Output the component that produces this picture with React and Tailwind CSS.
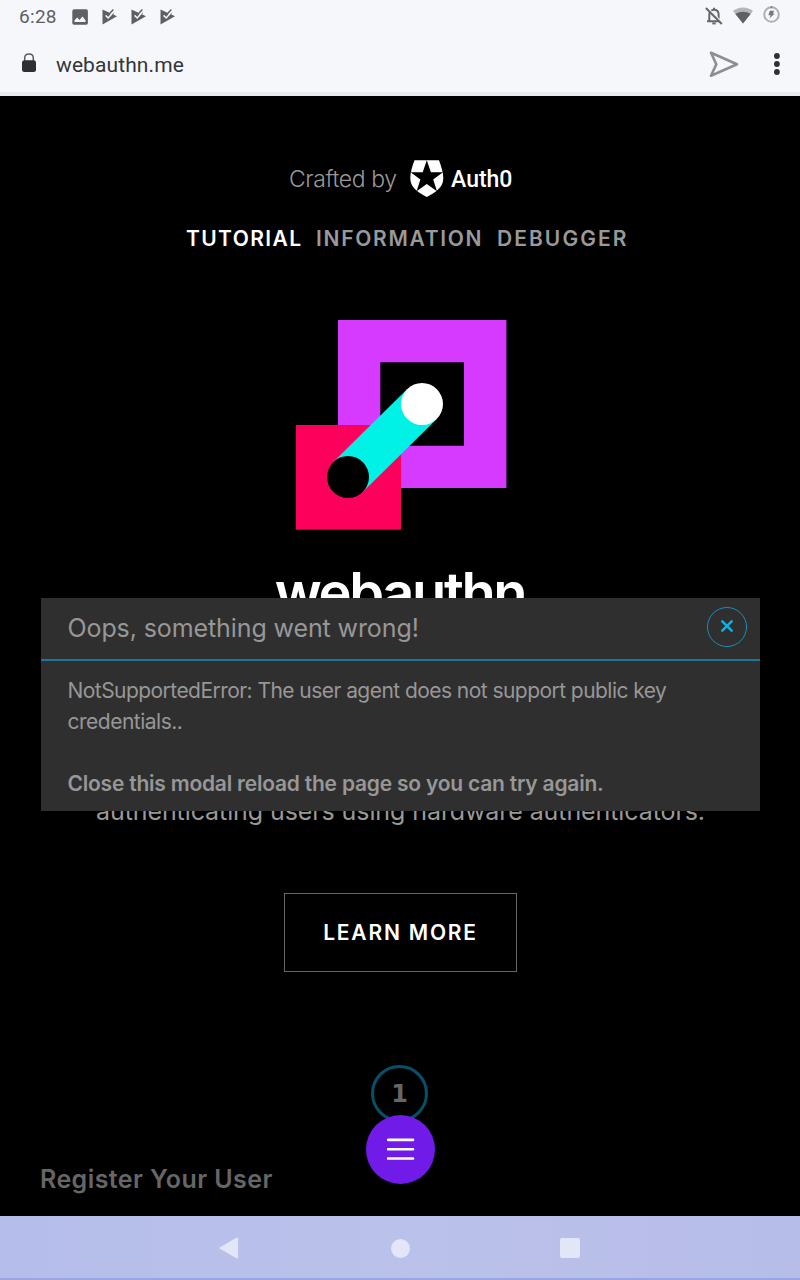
import React from "react";

function PlayCheckIcon() {
  return (
    <svg className="h-[16px] w-[15px]" viewBox="0 0 15 16">
      <path d="M0.5 0.5 L7 3.4 L9 6 L12.5 2 L11.3 5.6 L15 7.3 L0.5 15.5 Z" fill="#5f6063" />
      <path d="M3.6 6.4 L6.2 9 L12.3 1.9" fill="none" stroke="#f5f7fb" strokeWidth="1.5" />
      <path d="M4.4 4.2 L6.1 6.1 L11.4 0.6" fill="none" stroke="#5f6063" strokeWidth="1.4" />
    </svg>
  );
}

function StatusBar() {
  return (
    <div className="flex h-[33px] items-center justify-between pl-[19px] pr-[20px]">
      <div className="flex items-center">
        <span className="w-[53px] whitespace-nowrap text-[19px] leading-[33px] tracking-[0.3px] text-[#5f6063]">6:28</span>
        <svg className="h-[16px] w-[16px]" viewBox="0 0 16 16">
          <rect x="0.3" y="0.3" width="15.6" height="15.4" rx="1.8" fill="#5f6063" />
          <path d="M2.5 13 V11.2 L5.3 8.6 L7.4 11 L10.5 7.5 L13.5 11.2 V13 Z" fill="#f5f7fb" />
        </svg>
        <div className="ml-[14px] flex gap-[14px]">
          <PlayCheckIcon />
          <PlayCheckIcon />
          <PlayCheckIcon />
        </div>
      </div>
      <div className="flex items-center">
        <svg className="mb-[1px] h-[18px] w-[18px]" viewBox="0 0 18 18" fill="none" stroke="#66676a">
          <path d="M4.3 14 V7.5 C4.3 4.7 6.2 2.8 9 2.8 C11.8 2.8 13.6 4.8 13.6 7.5 V14" strokeWidth="2" />
          <path d="M2 14.2 H16 M9 0.8 V3" strokeWidth="2" />
          <path d="M7.3 16.4 H10.7" strokeWidth="2" />
          <path d="M2.3 1 L17.6 16.3" stroke="#f5f7fb" strokeWidth="2" />
          <path d="M0.9 1 L16.8 17" strokeWidth="2" />
        </svg>
        <svg className="mb-[2px] ml-[10px] h-[17px] w-[20px]" viewBox="0 0 20 17">
          <path d="M0 4 C5.5 -0.7 14.5 -0.7 20 4 L10 16.5 Z" fill="#b5b6b9" />
          <path d="M2.4 7 C7 3.9 13 3.9 17.6 7 L10 16.5 Z" fill="#5f6063" />
        </svg>
        <svg className="mb-[4px] ml-[10px] h-[17px] w-[17px]" viewBox="0 0 17 17">
          <circle cx="8.5" cy="8.5" r="7.3" fill="none" stroke="#aeafb2" strokeWidth="2" />
          <path d="M8.5 0.2 V2.2" stroke="#77787a" strokeWidth="1.6" />
          <path d="M6.8 4.8 H11.3 L9.8 7.5 H11.8 L6.3 12.6 L7.7 9.2 H5.4 Z" fill="#77787a" />
        </svg>
      </div>
    </div>
  );
}

function AddressBar() {
  return (
    <div className="flex h-[63px] items-center justify-between border-b-[4px] border-[#e9eaed] pl-[21px] pr-[20px] pt-[3px]">
      <div className="flex items-center">
        <svg className="mb-[2px] h-[20px] w-[16px]" viewBox="0 0 16 20">
          <path d="M3.7 9 V5 C3.7 -0.4 12.3 -0.4 12.3 5 V9" fill="none" stroke="#5b5b5d" strokeWidth="1.5" />
          <rect x="1" y="7.2" width="14" height="11.8" rx="2.5" fill="#2f2f31" />
        </svg>
        <span className="ml-[19px] whitespace-nowrap pt-[1px] text-[21px] leading-[30px] tracking-[0.1px] text-[#343538]">webauthn.me</span>
      </div>
      <div className="flex items-center">
        <svg className="h-[28px] w-[30px]" viewBox="0 0 30 28">
          <path d="M2 2.7 L28 14.2 L2 25.7 L7.3 14.2 Z" fill="none" stroke="#8d8e91" strokeWidth="2.6" strokeLinejoin="round" />
        </svg>
        <svg className="ml-[34px] h-[24px] w-[7px]" viewBox="0 0 7 24" fill="#303033">
          <circle cx="3.9" cy="4" r="2.9" />
          <circle cx="3.9" cy="12" r="2.9" />
          <circle cx="3.9" cy="20" r="2.9" />
        </svg>
      </div>
    </div>
  );
}

function WebauthnLogo() {
  return (
    <svg className="ml-[3px] mt-[71px] h-[210px] w-[211px]" viewBox="0 0 211 210">
      <path fillRule="evenodd" d="M42 0 H210.4 V168 H42 Z M84.3 42.3 V125.7 H168 V42.3 Z" fill="#d63aff" />
      <rect x="0" y="105" width="105" height="104.7" fill="#fc005b" />
      <path d="M52 157 L126 84" stroke="#00f2e6" strokeWidth="42" />
      <circle cx="52" cy="157" r="21" fill="#000" />
      <circle cx="126" cy="84" r="21" fill="#fff" />
    </svg>
  );
}

function ErrorModal() {
  return (
    <div className="absolute left-[40.5px] top-[501.5px] h-[213.5px] w-[719.5px] bg-[#2f2f2f] text-[#979797]">
      <div className="flex h-[63px] items-center justify-between border-b-2 border-[#197899] pl-[27px] pr-[13px]">
        <h2 className="whitespace-nowrap text-[25px] leading-[30px] tracking-[-0.1px]">Oops, something went wrong!</h2>
        <button className="mb-[2px] flex h-[40px] w-[40px] items-center justify-center rounded-full border-[1.5px] border-[#1490b8] pb-[2px]">
          <svg className="h-[14px] w-[14px]" viewBox="0 0 14 14">
            <path d="M2.3 2.3 L11.7 11.7 M11.7 2.3 L2.3 11.7" stroke="#0cb2e8" strokeWidth="2.5" strokeLinecap="round" />
          </svg>
        </button>
      </div>
      <div className="whitespace-nowrap pl-[27px] pt-[14px] text-[21px] leading-[31px]">
        <p className="tracking-[-0.55px]">NotSupportedError: The user agent does not support public key</p>
        <p className="tracking-[-0.5px]">credentials..</p>
        <p className="mt-[31px] font-semibold tracking-[-0.22px]">Close this modal reload the page so you can try again.</p>
      </div>
    </div>
  );
}

export default function App() {
  return (
    <div className="h-[1280px] w-[800px] overflow-hidden bg-black font-['Inter',sans-serif]">
      <header className="h-[96px] bg-[#f5f7fb] font-['Roboto',sans-serif]">
        <StatusBar />
        <AddressBar />
      </header>
      <main className="relative flex h-[1120px] flex-col items-center overflow-hidden bg-black pt-[64px]">
        <div className="flex h-[38px] w-full items-center pl-[289px]">
          <span className="w-[121px] whitespace-nowrap text-[23px] font-light leading-[38px] tracking-[-0.4px] text-[#999]">Crafted by</span>
          <svg className="h-[38px] w-[34px]" viewBox="0 0 34 38">
            <path d="M4.5 0.3 H29 C31 6 33.3 12 33.3 18 C33.3 27 27 31.5 16.8 37 C6.5 31.5 0.3 27 0.3 18 C0.3 12 2.5 6 4.5 0.3 Z" fill="#fff" />
            <path d="M16.8 0.3 L20.9 12.2 H33 L23.2 19.4 L27 31.2 L16.8 24 L6.6 31.2 L10.4 19.4 L0.6 12.2 H12.7 Z" fill="#000" />
          </svg>
          <span className="ml-[7px] whitespace-nowrap pt-[2px] font-['Roboto',sans-serif] text-[23px] font-medium leading-[38px] text-white">Auth0</span>
        </div>
        <nav className="mt-[31px] flex h-[20px] w-full whitespace-nowrap pl-[186px] text-[21px] font-semibold leading-[20px] text-[#999]">
          <a className="w-[130px] tracking-[1.4px] text-white">TUTORIAL</a>
          <a className="w-[181px] tracking-[1.7px]">INFORMATION</a>
          <a className="tracking-[2.05px]">DEBUGGER</a>
        </nav>
        <WebauthnLogo />
        <h1 className="mt-[32px] h-[64px] whitespace-nowrap text-[56px] font-semibold leading-[62px] tracking-[-2.4px] text-white">webauthn</h1>
        <p className="mt-[165px] h-[40px] whitespace-nowrap pl-[1px] text-[25px] leading-[40px] tracking-[-0.09px] text-[#999]">authenticating users using hardware authenticators.</p>
        <button className="mt-[62px] h-[79px] w-[233px] whitespace-nowrap border border-[#666] pl-[1px] text-[21px] font-semibold tracking-[1.8px] text-white">LEARN MORE</button>
        <div className="ml-[371px] mt-[93px] flex h-[57px] w-[57px] items-center justify-center self-start rounded-full border-[3px] border-[#07506a] pt-[1px] font-['DejaVu_Sans',sans-serif] text-[24px] font-bold text-[#666]">1</div>
        <h3 className="mt-[42px] h-[30px] self-start whitespace-nowrap pl-[40px] text-[25px] font-semibold leading-[30px] tracking-[0.42px] text-[#666]">Register Your User</h3>
        <ErrorModal />
        <button className="absolute left-[366px] top-[1019px] flex h-[69px] w-[69px] items-center justify-center rounded-full bg-[#711be8]">
          <svg className="h-[24px] w-[28px]" viewBox="0 0 28 24">
            <path d="M1 1.9 H26 M1 11.3 H26 M1 20.5 H26" stroke="#fff" strokeWidth="2.6" strokeLinecap="round" />
          </svg>
        </button>
      </main>
      <footer className="flex h-[64px] items-center border-b-2 border-[#9aa6e4] bg-linear-to-r from-[#b5bdea] via-[#bac1ea] to-[#b7bde9] pl-[219px] pt-[2px]">
        <svg className="h-[22px] w-[20px]" viewBox="0 0 20 22">
          <path d="M1.3 11 L18.3 1.3 V20.7 Z" fill="#e2e6f7" stroke="#e2e6f7" strokeWidth="1.6" strokeLinejoin="round" />
        </svg>
        <span className="ml-[152px] h-[19px] w-[19px] rounded-full bg-[#e2e6f7]" />
        <span className="ml-[150px] h-[20px] w-[20px] rounded-[2px] bg-[#e2e6f7]" />
      </footer>
    </div>
  );
}
